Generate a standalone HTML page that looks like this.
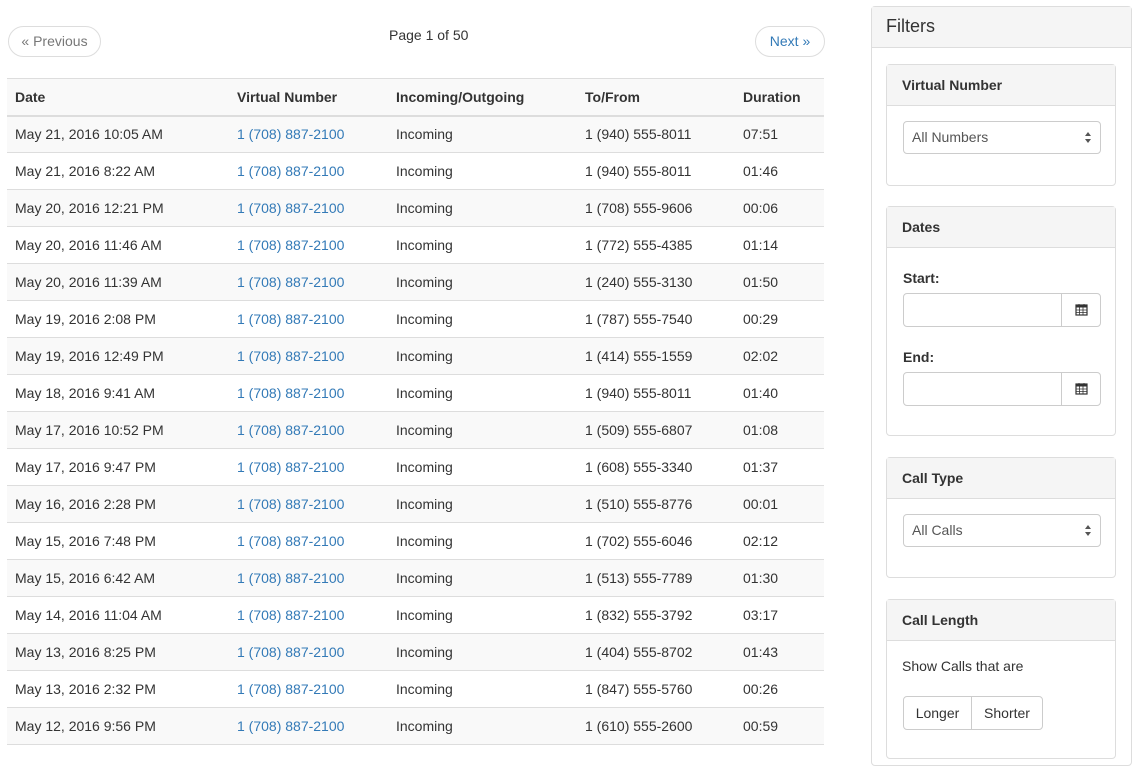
<!DOCTYPE html>
<html><head><meta charset="utf-8"><style>
*{box-sizing:border-box}
body{margin:0;width:1136px;height:745px;overflow:hidden;font-family:"Liberation Sans",Helvetica,Arial,sans-serif;font-size:14px;color:#333;background:#fff;position:relative}
.abs{position:absolute}
.pill{position:absolute;top:26px;height:31px;border:1px solid #ddd;border-radius:16px;line-height:29px;text-align:center;font-size:14px}
table{position:absolute;left:7px;top:78px;width:817px;border-collapse:collapse}
th{text-align:left;font-weight:bold;height:37px;padding:0 8px;border-top:1px solid #ddd;border-bottom:2px solid #ddd;background:#f9f9f9}
td{height:37px;padding:0 8px;border-bottom:1px solid #ddd}
tbody tr:nth-child(odd) td{background:#f9f9f9}
a{color:#337ab7;text-decoration:none}
.outer{position:absolute;left:871px;top:6px;width:261px;height:760px;border:1px solid #ddd;border-radius:4px}
.outer .hd{height:41px;background:#f5f5f5;border-bottom:1px solid #ddd;font-size:18px;padding:9px 14px;}
.p{position:absolute;left:886px;width:230px;border:1px solid #ddd;border-radius:4px;background:#fff}
.p .h{height:41px;background:#f5f5f5;border-bottom:1px solid #ddd;font-weight:bold;padding:12px 15px}
.sel{position:absolute;left:16px;width:198px;height:33px;border:1px solid #ccc;border-radius:4px;padding:0 8px;line-height:31px;color:#555}
.sel:after{content:"";position:absolute;right:9px;top:10px;border:3.5px solid transparent;border-bottom:4px solid #555;border-top:0}
.sel:before{content:"";position:absolute;right:9px;top:17px;border:3.5px solid transparent;border-top:4px solid #555;border-bottom:0}
.inp{position:absolute;left:16px;width:198px;height:34px;border:1px solid #ccc;border-radius:4px}
.inp .ad{position:absolute;right:0;top:0;width:39px;height:32px;border-left:1px solid #ccc}
.lbl{position:absolute;left:16px;font-weight:bold;color:#333}
</style></head><body>
<div class="pill" style="left:8px;width:93px;color:#777">« Previous</div>
<div class="abs" style="left:389px;top:27px">Page 1 of 50</div>
<div class="pill" style="left:755px;width:70px;color:#337ab7">Next »</div>
<table>
<thead><tr><th style="width:222px">Date</th><th style="width:159px">Virtual Number</th><th style="width:189px">Incoming/Outgoing</th><th style="width:158px">To/From</th><th>Duration</th></tr></thead>
<tbody>
<tr><td>May 21, 2016 10:05 AM</td><td><a>1 (708) 887-2100</a></td><td>Incoming</td><td>1 (940) 555-8011</td><td>07:51</td></tr>
<tr><td>May 21, 2016 8:22 AM</td><td><a>1 (708) 887-2100</a></td><td>Incoming</td><td>1 (940) 555-8011</td><td>01:46</td></tr>
<tr><td>May 20, 2016 12:21 PM</td><td><a>1 (708) 887-2100</a></td><td>Incoming</td><td>1 (708) 555-9606</td><td>00:06</td></tr>
<tr><td>May 20, 2016 11:46 AM</td><td><a>1 (708) 887-2100</a></td><td>Incoming</td><td>1 (772) 555-4385</td><td>01:14</td></tr>
<tr><td>May 20, 2016 11:39 AM</td><td><a>1 (708) 887-2100</a></td><td>Incoming</td><td>1 (240) 555-3130</td><td>01:50</td></tr>
<tr><td>May 19, 2016 2:08 PM</td><td><a>1 (708) 887-2100</a></td><td>Incoming</td><td>1 (787) 555-7540</td><td>00:29</td></tr>
<tr><td>May 19, 2016 12:49 PM</td><td><a>1 (708) 887-2100</a></td><td>Incoming</td><td>1 (414) 555-1559</td><td>02:02</td></tr>
<tr><td>May 18, 2016 9:41 AM</td><td><a>1 (708) 887-2100</a></td><td>Incoming</td><td>1 (940) 555-8011</td><td>01:40</td></tr>
<tr><td>May 17, 2016 10:52 PM</td><td><a>1 (708) 887-2100</a></td><td>Incoming</td><td>1 (509) 555-6807</td><td>01:08</td></tr>
<tr><td>May 17, 2016 9:47 PM</td><td><a>1 (708) 887-2100</a></td><td>Incoming</td><td>1 (608) 555-3340</td><td>01:37</td></tr>
<tr><td>May 16, 2016 2:28 PM</td><td><a>1 (708) 887-2100</a></td><td>Incoming</td><td>1 (510) 555-8776</td><td>00:01</td></tr>
<tr><td>May 15, 2016 7:48 PM</td><td><a>1 (708) 887-2100</a></td><td>Incoming</td><td>1 (702) 555-6046</td><td>02:12</td></tr>
<tr><td>May 15, 2016 6:42 AM</td><td><a>1 (708) 887-2100</a></td><td>Incoming</td><td>1 (513) 555-7789</td><td>01:30</td></tr>
<tr><td>May 14, 2016 11:04 AM</td><td><a>1 (708) 887-2100</a></td><td>Incoming</td><td>1 (832) 555-3792</td><td>03:17</td></tr>
<tr><td>May 13, 2016 8:25 PM</td><td><a>1 (708) 887-2100</a></td><td>Incoming</td><td>1 (404) 555-8702</td><td>01:43</td></tr>
<tr><td>May 13, 2016 2:32 PM</td><td><a>1 (708) 887-2100</a></td><td>Incoming</td><td>1 (847) 555-5760</td><td>00:26</td></tr>
<tr><td>May 12, 2016 9:56 PM</td><td><a>1 (708) 887-2100</a></td><td>Incoming</td><td>1 (610) 555-2600</td><td>00:59</td></tr>
</tbody></table>

<div class="outer"><div class="hd">Filters</div></div>

<div class="p" style="top:64px;height:122px"><div class="h">Virtual Number</div>
<div class="sel" style="top:56px">All Numbers</div></div>

<div class="p" style="top:206px;height:230px"><div class="h">Dates</div>
<div class="lbl" style="top:63px">Start:</div>
<div class="inp" style="top:86px"><div class="ad"><svg width="39" height="32" viewBox="0 0 39 32"><rect x="14" y="11" width="11" height="10" fill="none" stroke="#333" stroke-width="1.2"/><rect x="14" y="11" width="11" height="2.5" fill="#333"/><path d="M17 10v2M22 10v2M14 16h11M14 18.5h11M17.5 13v8M21 13v8" stroke="#333" stroke-width="0.8"/></svg></div></div>
<div class="lbl" style="top:142px">End:</div>
<div class="inp" style="top:165px"><div class="ad"><svg width="39" height="32" viewBox="0 0 39 32"><rect x="14" y="11" width="11" height="10" fill="none" stroke="#333" stroke-width="1.2"/><rect x="14" y="11" width="11" height="2.5" fill="#333"/><path d="M17 10v2M22 10v2M14 16h11M14 18.5h11M17.5 13v8M21 13v8" stroke="#333" stroke-width="0.8"/></svg></div></div>
</div>

<div class="p" style="top:457px;height:121px"><div class="h">Call Type</div>
<div class="sel" style="top:56px">All Calls</div></div>

<div class="p" style="top:599px;height:160px"><div class="h">Call Length</div>
<div class="abs" style="left:15px;top:58px">Show Calls that are</div>
<div class="abs" style="left:16px;top:96px;width:140px;height:34px;border:1px solid #ccc;border-radius:4px;display:flex">
<div style="width:68px;border-right:1px solid #ccc;text-align:center;line-height:32px">Longer</div>
<div style="flex:1;text-align:center;line-height:32px">Shorter</div></div>
</div>
</body></html>
